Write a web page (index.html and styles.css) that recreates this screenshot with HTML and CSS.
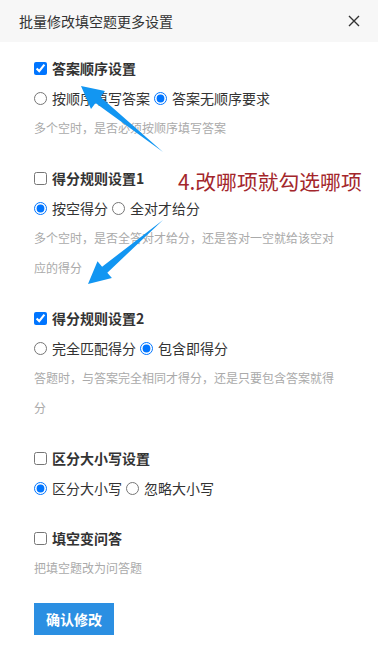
FILE: index.html
```html
<!DOCTYPE html>
<html lang="zh-CN">
  <head>
    <meta charset="UTF-8" />
    <meta name="viewport" content="width=device-width, initial-scale=1.0" />
    <title>批量修改填空题更多设置</title>
    <link rel="stylesheet" href="styles.css">
  </head>
  <body>
    <div class="dialog">
      <div class="header">
        <span class="title">批量修改填空题更多设置</span>
        <svg class="close" width="12" height="12" viewBox="0 0 12 12">
          <path d="M1 1 L11 11 M11 1 L1 11" />
        </svg>
      </div>

      <div class="content">
        <!-- 答案顺序 -->
        <div class="section">
          <label class="row label"><input type="checkbox" checked> 答案顺序设置</label>
          <div class="row">
            <label class="opt"><input type="radio" name="order"> 按顺序填写答案</label>
            <label class="opt"><input type="radio" name="order" checked> 答案无顺序要求</label>
          </div>
          <p class="desc">多个空时，是否必须按顺序填写答案</p>
        </div>

        <!-- 得分规则1 -->
        <div class="section">
          <label class="row label"><input type="checkbox"> 得分规则设置1</label>
          <div class="row">
            <label class="opt"><input type="radio" name="rule1" checked> 按空得分</label>
            <label class="opt"><input type="radio" name="rule1"> 全对才给分</label>
          </div>
          <p class="desc">多个空时，是否全答对才给分，还是答对一空就给该空对应的得分</p>
        </div>

        <!-- 得分规则2 -->
        <div class="section">
          <label class="row label"><input type="checkbox" checked> 得分规则设置2</label>
          <div class="row">
            <label class="opt"><input type="radio" name="rule2"> 完全匹配得分</label>
            <label class="opt"><input type="radio" name="rule2" checked> 包含即得分</label>
          </div>
          <p class="desc">答题时，与答案完全相同才得分，还是只要包含答案就得分</p>
        </div>

        <!-- 大小写 -->
        <div class="section">
          <label class="row label"><input type="checkbox"> 区分大小写设置</label>
          <div class="row">
            <label class="opt"><input type="radio" name="case" checked> 区分大小写</label>
            <label class="opt"><input type="radio" name="case"> 忽略大小写</label>
          </div>
        </div>

        <!-- 填空变问答 -->
        <div class="section">
          <label class="row label"><input type="checkbox"> 填空变问答</label>
          <p class="desc">把填空题改为问答题</p>
        </div>

        <button class="btn-primary">确认修改</button>
      </div>
    </div>

    <!-- annotation overlay -->
    <svg class="arrows" width="378" height="650" viewBox="0 0 378 650">
      <polygon points="81,86 105,91 100.5,97 163,152 95.5,103 91,109" />
      <polygon points="88,284 97.5,261.3 102.1,266.7 163,220 107.3,272.7 111.9,278" />
    </svg>
    <div class="note">4.改哪项就勾选哪项</div>
  </body>
</html>
```

FILE: styles.css
```css
body {
  margin: 0;
  position: relative;
  font-family: "Noto Sans CJK SC", "Noto Sans", sans-serif;
  font-size: 14px;
  color: #333;
  background: #fff;
}

.header {
  height: 42px;
  background: #f7f7f7;
  display: flex;
  align-items: center;
  justify-content: space-between;
  padding: 0 18px 0 19px;
}
.title {
  font-size: 14px;
  color: #333;
}
.close path {
  stroke: #333;
  stroke-width: 1.4;
  fill: none;
}

.content {
  padding: 11px 34px 0;
}
.section {
  margin-bottom: 20px;
}
.row {
  display: flex;
  align-items: center;
  height: 30px;
}
.label {
  font-weight: bold;
}
.row input {
  width: 13px;
  height: 13px;
  margin: 0 5px 0 0;
}
.opt {
  display: flex;
  align-items: center;
  margin-right: 4px;
}
.desc {
  margin: 0;
  font-size: 12px;
  line-height: 30px;
  color: #aaa;
}

.btn-primary {
  width: 80px;
  height: 32px;
  border: none;
  background: #2b8fe2;
  color: #fff;
  font-family: inherit;
  font-size: 14px;
  font-weight: bold;
  cursor: pointer;
}

.arrows {
  position: absolute;
  top: 0;
  left: 0;
  pointer-events: none;
}
.arrows polygon {
  fill: #1296f2;
}
.note {
  position: absolute;
  left: 178px;
  top: 166px;
  font-size: 20.8px;
  color: #a3262b;
  white-space: nowrap;
}
```
